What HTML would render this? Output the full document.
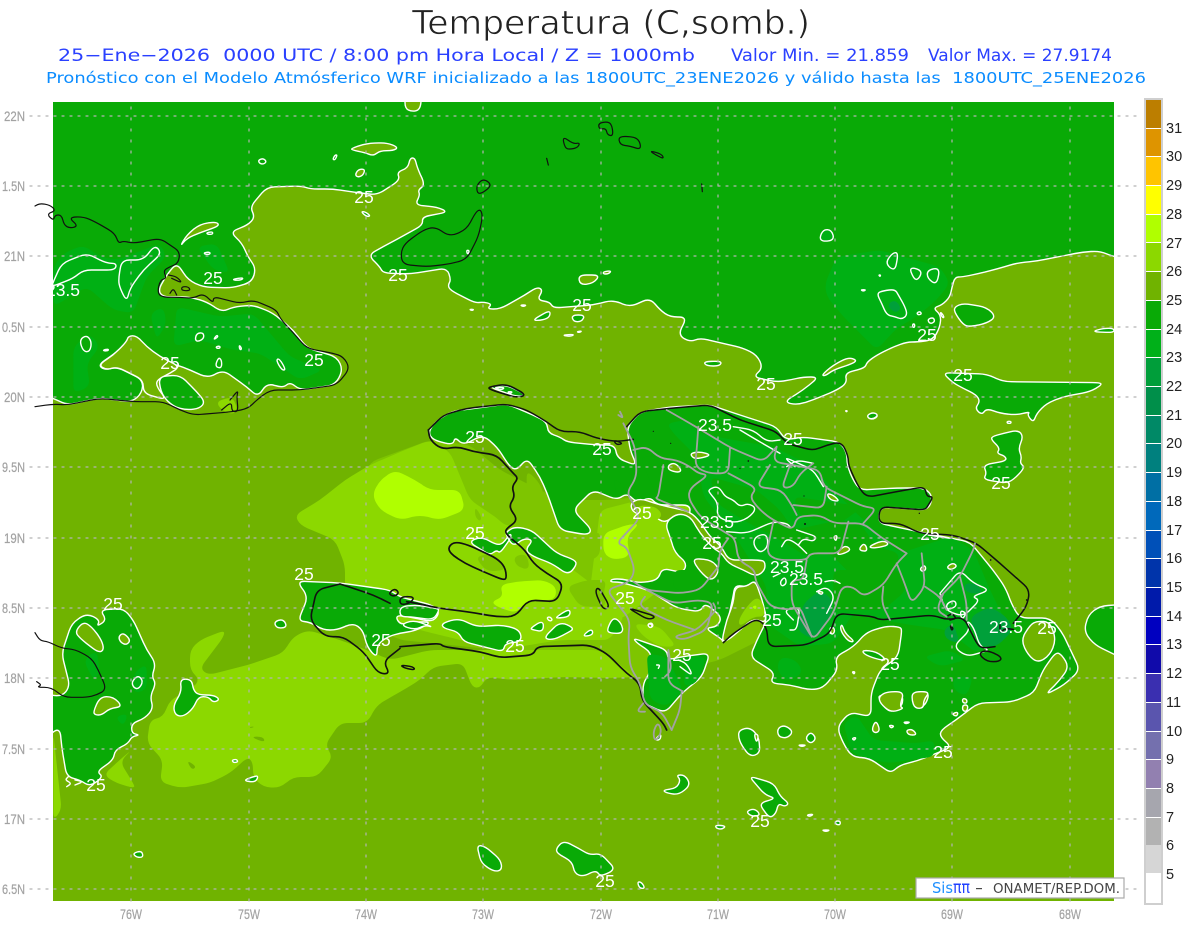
<!DOCTYPE html>
<html><head><meta charset="utf-8"><title>Temperatura</title>
<style>
html,body{margin:0;padding:0;background:#fff}
svg{display:block}
path{vector-effect:non-scaling-stroke;stroke-linejoin:round;stroke-linecap:round}
.c{stroke:#fff;stroke-width:1.4}
.d{fill:#09aa06}.o{fill:#70b300}.m{fill:#00b014}.l{fill:#8cd800}.y{fill:#b0ff00}.t{fill:#7ec500}.q{fill:#00a03a}
.n{fill:none}
.k{fill:none;stroke:#111;stroke-width:1.2}
.g{fill:none;stroke:#a2a2a2;stroke-width:1.8}
.lab{font:17.5px "Liberation Sans",sans-serif;fill:#fff;text-anchor:middle}
.ax{font:14px "Liberation Sans",sans-serif;fill:#a2a2a2;stroke:#a2a2a2;stroke-width:.2}
.cb{font:14.5px "Liberation Sans",sans-serif;fill:#222}
</style></head><body>
<svg width="1200" height="927" viewBox="0 0 1200 927" xmlns="http://www.w3.org/2000/svg">
<defs><clipPath id="pl"><rect x="53" y="102" width="1061" height="799"/></clipPath></defs>
<rect width="1200" height="927" fill="#fff"/>
<text x="412" y="34" font-family="DejaVu Sans,sans-serif" font-size="33" fill="#222" textLength="398" lengthAdjust="spacingAndGlyphs" stroke="#fff" stroke-width=".7">Temperatura (C,somb.)</text>
<g font-family="DejaVu Sans,sans-serif" font-size="17" fill="#2a40ff" lengthAdjust="spacingAndGlyphs">
<text x="58" y="61" textLength="637" lengthAdjust="spacingAndGlyphs" xml:space="preserve">25−Ene−2026  0000 UTC / 8:00 pm Hora Local / Z = 1000mb</text>
<text x="731" y="61" textLength="178" lengthAdjust="spacingAndGlyphs">Valor Min. = 21.859</text>
<text x="928" y="61" textLength="184" lengthAdjust="spacingAndGlyphs">Valor Max. = 27.9174</text>
</g>
<text x="46" y="83" font-family="DejaVu Sans,sans-serif" font-size="15.5" fill="#0a8cff" textLength="1100" lengthAdjust="spacingAndGlyphs" xml:space="preserve">Pronóstico con el Modelo Atmósferico WRF inicializado a las 1800UTC_23ENE2026 y válido hasta las  1800UTC_25ENE2026</text>

<g clip-path="url(#pl)">
<rect x="53" y="102" width="1061" height="799" class="o"/>
<!-- light zones -->
<path class="l" d="M225 630 223 638 200 668 208 675 248 665 283 653 293 637 308 630 340 640 367 650 390 660 430 650 500 650 620 650 640 677 607 678 563 677 513 680 487 677 480 688 472 687 463 663 433 667 420 680 400 692 377 705 367 723 340 723 325 745 333 757 317 777 293 777 280 788 263 787 253 777 253 763 248 757 230 773 210 783 180 788 160 782 163 760 147 743 150 720 163 717 170 700 190 690 200 680 190 670 190 650 200 640z"/>
<path class="t" d="M350 540 350 520 370 462 430 440 470 445 500 470 560 500 610 500 700 490 760 560 760 640 720 660 640 680 600 650 500 650 400 640 350 615z"/>
<path class="l" d="M295 515 320 500 345 480 370 465 400 452 430 440 450 452 470 500 500 520 560 560 600 590 625 615 610 640 560 640 500 650 440 635 400 625 350 615 310 605 345 590 345 565 335 540 300 525z"/>
<path class="l" d="M600 510 640 500 690 495 700 560 660 590 620 620 590 590z"/>
<path class="y" d="M380 480 395 470 415 480 430 490 460 490 465 510 440 520 420 515 400 520 380 510 372 495z"/>
<g transform="translate(400 390) scale(.33333)">
<path class="t" d="M245 310 290 270 340 250 350 320 330 360 350 400 320 410 250 350zM225 350 245 380 240 395 225 380zM225 500 280 490 320 540 260 545zM340 500 380 490 390 540 350 530z"/>
<path class="y" d="M300 585 350 575 430 570 470 590 465 630 385 630 350 670 290 650 275 635 310 620z"/>
<path class="y" d="M610 430 680 405 720 400 680 440 690 500 640 510 610 490z"/>
<path class="t" d="M500 590 560 570 620 570 610 610 620 650 540 650z"/>
<path class="t" d="M380 240 420 280 470 430 560 450 600 420 600 500 540 520 460 470 380 330z"/>
</g>
<g transform="translate(600 390) scale(.33333)">
<path class="l" d="M420 660 460 600 480 590 500 660 470 680 430 710z"/>
<path class="y" d="M452 650 470 645 468 660z"/>
<path class="l" d="M100 700 180 710 230 770 180 770 130 740zM0 790 60 820 90 860 0 860z"/>
</g>
<g transform="translate(0 580) scale(.33333)">
<path class="l" d="M310 585 370 530 395 510 360 545 400 610 405 625 350 610zM160 460 185 690 160 720z"/>
<path class="o" d="M560 540 590 560 575 570zM750 440 765 440 750 445zM750 470 790 470 795 488z"/>
</g>
<!-- top dark region -->
<path class="d c" d="M40 90 1130 90 1130 258 1114 257 1100 251 1083 252 1057 257 1037 261 1017 263 997 269 977 274 962 277 955 277 952 287 950 297 942 305 933 308 941 315 940 327 933 340 917 342 907 342 893 347 877 355 867 362 865 368 845 373 847 383 837 390 813 400 797 405 784 402 803 390 819 377 803 377 790 380 777 382 753 377 763 368 757 355 743 348 717 342 700 338 690 342 678 335 687 317 670 317 660 310 650 298 630 307 613 300 593 305 553 308 550 302 537 300 543 290 537 287 525 295 500 309 487 309 492 304 483 302 475 303 450 290 448 285 451 280 447 268 410 274 383 273 380 267 368 255 390 243 423 225 422 217 448 212 437 207 415 205 420 195 418 190 425 185 417 167 415 158 410 158 408 168 397 172 400 180 377 195 353 192 333 189 310 189 302 186 267 187 250 207 255 217 248 225 230 232 242 243 248 257 256 268 252 282 232 288 203 287 188 280 177 263 168 273 158 290 163 297 190 297 207 302 222 312 233 307 253 305 273 313 293 330 307 348 337 357 343 370 335 385 300 390 290 382 283 388 267 383 258 397 247 387 223 370 208 378 183 367 160 360 147 353 133 336 127 342 117 352 98 365 105 370 117 367 143 380 142 393 132 402 100 398 67 405 53 398 40 395z"/>
<!-- cuba interior -->
<g transform="translate(0 100) scale(.33333)">
<path class="m" d="M160 500 190 460 250 435 300 470 350 480 430 450 480 430 500 470 440 530 400 640 340 630 260 560 160 620zM450 640 490 620 500 670 470 720zM520 740 530 620 660 650 760 640 870 770 970 810 900 840 780 760 700 750 600 720zM220 740 270 700 300 740 260 790 270 860 220 880zM590 440 650 430 690 520 640 510zM420 810 435 808 425 812z"/>
<path class="o c" d="M540 440 560 405 600 372 650 365 658 378 600 398 560 415z"/>
<path class="m c" d="M160 545 185 490 260 460 320 490 350 490 345 510 250 510 220 535 155 560zM355 540 365 480 430 480 465 435 485 460 430 510 390 565 380 605 360 565z"/>
<path class="d c" d="M620 398 638 395 638 403 622 403zM612 458 630 456 630 463 615 463zM700 537 730 533 725 540 702 541z"/>
<path class="d c" d="M585 720 590 700 610 698 612 715 595 725zM238 720 260 705 275 725 270 755 250 755zM645 800 655 772 665 780 665 805zM828 780 838 775 858 810 845 810zM1005 165 1012 165 1005 180 998 178zM775 180 790 175 800 185 790 193 778 190zM718 735 725 745 722 750 718 745zM310 750 325 747 325 752 312 753z"/>
<path style="fill:#8cd800;stroke:none" d="M645 905 700 890 715 940 675 940z"/>
<path class="o c" d="M385 708 410 707 440 740 480 770 540 800 510 820 470 840 470 860 500 900 430 880 430 840 350 800 320 810 295 795 340 765 380 725z"/>
<path class="d c" d="M475 830 540 825 590 875 615 905 600 925 560 930 520 920 485 885z"/>
<path class="m c" d="M640 720 650 705 655 710zM648 740 660 738 660 745 650 745z"/>
</g>
<g transform="translate(0 580) scale(.33333)">
<path class="d c" d="M185 220 215 130 260 100 300 120 290 140 320 120 300 90 370 85 400 120 440 210 468 250 455 290 468 310 450 350 460 385 435 415 395 430 395 460 420 465 395 470 385 490 345 510 340 540 290 575 310 590 270 620 240 600 200 590 185 500 180 445 150 460 150 700 120 700 120 340 185 350 210 320z"/>
<path class="m" d="M250 240 290 210 300 280 280 300zM400 280 440 250 440 330 400 340zM345 410 385 400 370 440z"/>
<path class="o c" d="M225 155 250 125 275 140 305 180 312 210 295 218 240 175zM355 170 370 158 392 180 380 195 362 188zM280 395 300 350 340 350 368 380 330 385 305 405 285 405z"/>
<path class="m c" d="M395 305 415 285 430 305 415 328 400 322z"/>
<path class="d c" d="M520 375 545 335 540 297 575 298 580 330 595 345 640 345 660 358 640 368 625 350 595 350 580 385 550 410 525 405zM398 820 425 812 430 832 410 832zM822 125 850 117 862 142 830 145zM696 540 710 538 714 546 700 548zM733 600 760 590 775 587 768 605 745 605z"/>
<path class="n c" d="M205 590 195 600 215 610 200 620M225 600 250 605 225 615"/>
</g>
<!-- south Haiti -->
<path class="d c" d="M297 581 308 597 298 621 310 622 323 630 337 630 353 623 363 630 367 647 377 658 377 645 387 637 400 633 415 631 432 622 412 622 400 625 395 615 410 617 433 622 440 612 432 605 400 597 390 590 340 583z"/>
<g transform="translate(400 390) scale(.33333)">
<path class="d c" d="M0 650 50 645 110 655 118 660 100 690 30 680 0 680z"/>
<path class="d c" d="M0 705 40 690 100 712 75 705 45 720z"/>
<path class="d c" d="M125 700 175 685 230 710 310 705 360 720 365 755 315 760 310 785 270 775 190 755 175 725 130 715z"/>
<path class="d c" d="M390 715 430 690 430 725 400 720zM470 680 510 655 510 680 470 685zM430 745 480 695 525 715 500 730 460 750zM545 740 575 715 580 735zM620 720 640 680 665 700 670 730 630 730z"/>
<path class="l c" d="M440 683 450 680 458 690 448 694z"/>
<path class="d c" d="M320 425 345 410 395 420 470 490 525 510 530 525 505 555 455 520 400 500 375 480 400 450 370 445 340 470 318 435zM205 455 245 440 290 465 310 460 330 430 335 440 300 490 290 480 270 495 245 480z"/>
<path class="d c" d="M742 703 755 698 760 708 750 714z"/>
</g>
<!-- main Hispaniola -->
<path class="d c" d="M428 432 437 420 453 411 470 409 507 404 533 415 547 422 548 433 560 437 567 442 597 445 615 445 617 458 637 466 630 450 627 427 640 412 670 407 710 405 740 415 777 427 785 440 803 437 840 442 847 453 847 465 853 480 860 490 897 488 925 488 933 497 928 510 880 507 878 523 920 532 970 542 993 570 1005 587 1013 607 1020 618 1050 618 1062 632 1080 670 1064 685 1045 695 1060 680 1069 667 1062 655 1056 652 1043 670 1034 693 1012 702 978 703 956 720 941 730 940 737 952 747 917 761 900 765 891 773 882 767 869 758 852 757 843 743 837 727 850 712 871 717 871 693 880 670 898 657 902 630 900 627 887 626 867 632 853 647 835 657 838 670 823 688 810 690 790 685 770 683 775 673 750 657 757 640 767 620 763 603 757 590 755 580 747 587 735 585 733 597 728 620 722 642 723 640 705 628 717 627 722 617 705 603 700 612 677 608 648 590 620 582 610 582 612 579 622 579 640 583 658 580 662 568 683 573 687 563 675 553 670 537 665 523 677 513 690 515 690 505 657 505 650 497 637 503 627 493 617 500 593 490 573 510 592 530 587 535 560 530 547 493 540 477 527 458 517 470 510 467 497 447 483 435 463 445 455 437 453 445 433 440z"/>
<g transform="translate(600 390) scale(.33333)">
<path class="m" d="M200 100 260 90 300 130 400 150 520 170 640 230 700 300 800 400 900 490 1050 440 1120 480 1170 600 1230 720 1130 790 1040 720 900 700 760 670 700 760 600 770 500 700 500 590 400 430 310 320 290 200 220 130z"/>
<path class="d" d="M330 260 470 300 540 360 580 420 720 390 780 400 830 470 900 490 880 560 760 560 690 490 620 500 540 450 430 390 350 340zM700 540 900 540 920 600 850 660 700 660zM580 320 790 350 720 400 600 380zM120 200 260 200 280 300 170 320zM40 260 80 300 50 320zM220 540 320 540 340 600 220 600z"/>
<path class="q" d="M610 640 660 600 700 630 690 690 640 750 590 720zM1110 680 1170 650 1220 680 1240 720 1190 770 1140 770 1120 720zM1090 580 1130 580 1150 610 1100 610zM1030 720 1060 700 1080 760 1040 750z"/>
<path class="m" d="M540 800 590 810 610 850 560 875 530 840zM970 800 1050 780 1100 810 1020 830zM1060 860 1120 860 1100 920 1060 900z"/>
<!-- pockets -->
<path class="o c" d="M90 340 120 325 180 345 270 365 300 395 330 440 365 470 385 510 430 510 480 510 495 515 495 540 470 560 430 540 385 520 365 490 340 475 300 430 270 378 230 370 195 400 165 380 100 370z"/>
<path class="l" d="M110 345 170 350 190 380 130 410 110 390z"/>
<path class="o c" d="M275 505 335 510 360 540 335 575 300 545z"/>
<path class="o c" d="M205 225 225 218 245 240 235 248 205 240zM270 190 300 185 335 195 300 205 280 205z"/>
<path class="o c" d="M680 310 700 315 720 335 690 330zM775 480 790 460 800 470 800 485zM805 470 850 450 870 465 820 475zM710 490 735 465 755 480 720 495zM700 440 712 435 708 455zM960 535 975 525 978 540 965 545zM1040 530 1060 518 1072 530 1050 540z"/>
<!-- south pocket -->
<path class="o c" d="M365 755 380 690 400 640 405 590 440 590 465 570 490 640 500 700 460 685 420 720 385 750z"/>
<path class="l" d="M415 690 440 650 470 620 490 640 495 680 460 680 420 710z"/>
<path class="y" d="M455 650 470 645 468 660z"/>
<path class="n c" d="M325 300 345 290 360 295 375 320 400 330 420 350 445 340 470 355 445 385 400 400 350 380 355 340 330 310zM380 425 440 430 520 395 560 400 570 410M465 440 500 430 505 470 480 490 460 465zM545 470 560 445 590 460 620 490M590 420 620 430 650 440 640 455 610 445 595 465M540 575 555 560 560 580 545 590zM520 560 540 550M650 605 680 590 705 620 680 670M675 575 700 570 720 580M585 230 550 200 640 240 670 290M400 110 460 120 500 155 540 150M560 230 590 210 640 220M420 120 470 150 540 190M1020 610 1080 540 1120 580 1170 600 1115 620 1140 630 1090 680 1035 660 1020 610M1060 770 1110 720 1100 690 1120 710 1140 770 1170 780 1100 800zM1040 640 1065 630 1070 650 1040 660zM1080 660 1100 670 1085 690zM985 435 1050 445M580 690 550 660 600 650 590 720 570 720M690 710 700 720 690 735z"/>
<path class="d c" d="M785 780 830 785 860 810 840 810 795 795z"/>
<path class="o c" d="M725 700 735 730 765 755 745 755 720 720z"/>
<path class="o c" d="M690 720 700 710 705 725 695 735z"/>
<path class="d c" d="M803 75 820 68 835 78 820 88 805 85z"/>
<path class="o c" d="M840 915 905 905 910 945 880 965 860 960 835 925zM940 905 990 905 975 950 940 955z"/>
<path class="o c" d="M650 605 670 605 665 615z"/>
</g>
<path class="d c" d="M633 638 667 650 668 660 680 657 710 653 702 677 683 692 665 713 643 703 643 683 650 673 652 653 637 643z"/>
<g transform="translate(600 390) scale(.33333)">
<path class="m" d="M140 790 200 800 250 900 200 950 150 930z"/>
<path class="m" d="M260 800 320 800 290 880 250 890z"/>
<path class="n c" d="M235 810 260 820 280 860 240 830M170 825 180 825 175 835"/>
<path class="o c" d="M143 705 150 700 158 708 150 714z"/>
</g>
<g transform="translate(440 640) scale(.43365 .33333)">
<path class="d c" d="M85 615 105 620 140 660 143 690 125 695 95 670zM268 625 285 602 320 625 345 645 370 640 405 688 370 710 360 690 330 710 310 700 305 665 270 640zM515 450 545 445 555 420 545 405 565 405 578 435 550 465 520 458zM712 408 770 430 785 470 805 490 795 500 780 490 775 520 760 535 735 490 775 475 750 465zM705 515 725 505 740 525 720 530zM690 270 715 262 735 290 738 340 715 350 695 315 688 290zM778 265 795 255 815 275 800 295 780 290zM855 275 868 295 855 312 842 295zM635 555 660 558 650 568 637 565zM455 725 465 727 473 745 460 745zM845 525 862 522 853 530zM825 315 845 315 835 320zM880 570 900 570 890 575zM912 543 923 543 923 555 912 553zM950 95 957 95 955 103zM495 300 510 280 508 300z"/>
<path class="m" d="M930 250 960 225 1000 300 1100 310 1140 300 1140 350 1030 370 950 340z"/>
<path class="o c" d="M1012 170 1030 155 1070 155 1060 200 1070 205 1040 218 1015 190zM1090 155 1130 155 1115 180 1115 205 1095 205 1088 180zM995 270 1005 240 1015 270 1005 280zM1075 270 1090 268 1100 285 1080 285zM1068 246 1085 246 1075 252zM1035 255 1048 258 1040 265zM950 295 960 292 955 302zM1205 175 1215 178 1215 190 1205 188zM1205 195 1218 195 1215 215 1205 212zM1180 222 1195 215 1192 230z"/>
<path class="o c" d="M724 280 735 285 730 310z"/>
</g>
<!-- right side -->
<g transform="translate(770 200) scale(.33333)">
<path class="m" d="M165 250 200 170 330 150 400 170 510 200 540 250 500 300 440 350 380 385 320 450 270 400 220 350 170 290z"/>
<path class="m c" d="M148 115 160 88 185 90 193 120 160 125zM345 190 368 158 385 158 375 215zM415 200 460 212 438 248zM472 210 510 203 500 255 472 235z"/>
<path class="m c" d="M320 280 340 272 375 268 385 285 405 320 412 345 395 358 375 350 350 345 335 310z"/>
<path class="q" d="M350 315 375 298 395 325 375 340z"/>
<path class="o c" d="M155 525 190 495 235 472 260 480 250 490 190 510 165 528z"/>
<path class="d c" d="M555 320 580 310 650 322 678 350 650 370 600 380 580 375 552 335z"/>
<path class="d c" d="M518 518 650 522 700 545 990 548 995 555 960 575 880 590 830 610 800 640 790 668 772 645 780 635 740 645 690 640 650 625 635 645 615 625 630 605 620 585 570 560 545 545z"/>
<path class="d c" d="M665 710 700 700 745 690 760 710 745 745 755 770 750 790 765 802 735 835 710 850 640 838 650 820 640 795 710 782 705 768 680 760 690 745 665 720z"/>
<path class="d c" d="M292 645 310 637 325 645 310 657 295 655zM965 395 1000 385 1032 385 1032 398z"/>
<path class="d c" d="M711 664 723 664 723 670 712 670zM440 339 450 334 455 342 445 345zM472 358 490 352 495 365 480 372zM428 372 434 372 434 382 428 382zM510 335 520 345 522 354 515 350zM272 269 288 269 280 274zM326 225 332 225 330 230zM226 632 232 632 230 636z"/>
</g>
<path class="d c" d="M1130 604 1100 606 1088 615 1084 632 1095 645 1130 662z"/>
<g transform="translate(350 100) scale(.33333)">
<path class="o c" d="M5 145 50 130 110 128 145 142 130 152 90 152 70 168 45 158 5 150zM15 225 25 208 45 207 40 225 25 232zM165 -10 215 -10 210 30 185 35 165 25z"/>
<path class="o c" d="M685 525 750 525 730 550 690 555zM760 515 785 512 775 522 760 522z"/>
<path class="d c" d="M33 335 45 335 62 348 50 350zM1060 785 1115 783 1110 798 1070 798zM545 662 600 630 600 650 580 660zM665 645 705 645 695 665 670 665zM635 705 675 703 660 710zM358 628 372 628 366 632zM510 615 530 615 520 620zM680 695 696 693 688 698zM415 860 470 855 530 885 500 890z"/>
<path class="m c" d="M350 450 358 452 355 462 351 460z"/>
<path class="m c" d="M430 862 465 862 455 870zM472 875 488 875 480 882z"/>
</g>
<!-- pocket on SE -->
<path class="o c" d="M1021 640 1030 625 1037 621 1050 622 1056 640 1050 655 1038 663 1028 655z"/>
</g>

<!-- coast lines -->
<g transform="translate(0 100) scale(.33333)">
<path class="k" d="M105 318 120 310 150 315 168 332 140 342 160 362 165 345 185 345 192 375 210 385 235 378 205 352 250 350 285 365 345 400 355 430 370 423 400 430 480 415 510 435 540 455 535 490 510 500 490 512 500 535 480 540 472 580 490 592 540 592 580 595 610 580 640 610 640 590 680 600 720 610 760 600 830 630 840 655 890 710 920 745 1000 760 1030 770 1050 805 1010 855 900 870 810 870 770 900 745 925 700 935 640 940 580 945 540 930 490 905 400 905 300 895 200 915 160 912 105 920"/>
<path class="k" d="M505 525 530 530 548 550 515 535M545 560 565 560 572 572 545 572zM510 580 520 565 530 585M690 900 715 870 710 890 715 935 695 935 695 905 665 930"/>
</g>
<g transform="translate(0 580) scale(.33333)">
<path class="k" d="M105 158 120 182 145 185 185 205 225 208 275 235 295 270 320 328 290 345 260 352 190 352 155 322 110 322 125 315 110 305"/>
<path class="k" style="stroke-width:1.6" d="M1020 12 1060 25 1120 45 1170 70M1020 12 950 30 930 120 975 170 1030 170 1090 215 1135 280 1170 282 1150 245 1200 205M1165 40 1185 25 1198 40 1180 50z"/>
</g>
<g transform="translate(350 100) scale(.33333)">
<path class="k" d="M378 258 400 235 428 256 385 287zM637 108 670 132 690 128 683 143 660 148 645 145zM745 70 770 65 785 72 790 108 772 105 768 85 748 88zM805 108 865 112 875 150 840 138 810 135zM898 152 935 162 942 177 918 165zM590 175 595 195M1055 252 1057 275"/>
<path class="k" d="M152 458 165 430 220 390 255 380 300 410 350 388 378 335 392 328 398 350 385 410 350 478 300 492 230 500 158 493z"/>
<path class="k" style="stroke-width:1.6" d="M410 862 470 852 530 885 500 893 430 872z"/>
</g>
<g transform="translate(400 390) scale(.33333)">
<path class="k" style="stroke-width:1.7" d="M85 120 90 150 125 178 175 170 220 185 290 195 340 250 355 265 335 290 345 320 325 350 355 390 320 415 315 430 375 480 400 520 440 550 490 580 470 635 385 630 345 680 290 680 200 665 120 655 50 640 20 635"/>
<path class="k" style="stroke-width:1.5" d="M85 120 130 75 200 55 320 42 380 60 440 95 480 125 540 125 590 145 650 155 700 148"/>
<path class="k" style="stroke-width:1.7" d="M145 470 165 455 205 465 290 505 315 530 320 565 310 570 250 545 195 520 150 490z"/>
<path class="k" style="stroke-width:1.7" d="M0 770 120 760 130 770 240 785 300 803 400 795 410 770 570 765 620 790 680 850 720 880 725 930 790 1000 800 1020"/>
<path class="k" style="stroke-width:1.5" d="M595 590 630 650 610 660 585 605zM690 655 770 680 745 690 695 660zM0 620 45 620 30 640 0 645zM0 825 40 830 45 840 15 835zM640 150 670 160 650 165z"/>
</g>
<g transform="translate(600 390) scale(.33333)">
<path class="k" style="stroke-width:1.5" d="M80 110 120 65 210 55 330 45 420 90 530 125 560 160 640 182 680 165 725 155 745 200 745 225 775 290 800 322 890 305 975 290 980 320 1000 320 985 345 975 360 840 350 835 400 900 400 960 430 1060 435 1130 460 1200 520 1290 600 1280 650 1240 700"/>
<path class="k" style="stroke-width:1.5" d="M370 758 400 730 470 685 500 710 505 770 620 765 690 730 710 670 820 680 840 690 1000 675 1040 690 1090 680 1130 760 1145 775 1185 770M1135 790 1160 780 1205 800 1200 815 1160 815zM1050 705 1060 715 1055 722zM1040 680 1055 670 1070 685 1050 690M1200 705 1200 730 1215 715 1240 718"/>
<g fill="#111"><circle cx="160" cy="124" r="1.8"/><circle cx="212" cy="160" r="1.8"/><circle cx="445" cy="213" r="2.5"/><circle cx="420" cy="235" r="1.8"/><circle cx="615" cy="402" r="3"/><circle cx="612" cy="318" r="1.8"/><circle cx="1172" cy="510" r="2.5"/><circle cx="1280" cy="630" r="2.5"/><circle cx="958" cy="370" r="2"/></g>
<path class="g" d="M70 100 105 170 110 260 80 310 100 340 120 385 50 460 80 470 105 540 90 575 20 600 90 690 85 740 90 830 120 880 135 945 185 965 215 1020"/>
<path class="g" d="M100 180 140 170 180 205 230 210 270 230 295 250 325 255 270 295 265 325 300 380 380 430 405 445 415 510 465 540 465 570 510 650 570 660 600 650 635 740"/>
<path class="g" d="M190 225 175 320 165 325 265 365M200 60 270 100 395 175 490 215 530 170M295 110 290 180 285 230 325 250 385 250 390 175M385 250 470 295 450 320 470 350 510 385 580 420 590 380 660 375 700 400 790 400 840 440 920 490M510 225 470 290 545 300 575 345 590 375M570 225 545 295 580 290 600 250 640 220M530 170 520 215 660 240 670 290 790 350 830 355 790 400M580 345 670 355 680 290M520 395 500 490 530 510 620 510 630 490 720 490 745 395M620 510 610 570 575 570 575 640 640 750 700 670 725 590 760 590 790 620 850 585 890 520 920 490M850 590 845 640 870 690M890 520 910 570 935 640 975 590 965 490M975 590 1020 620 1040 660M1020 620 1080 560 1120 480 1125 460M1080 560 1100 640 1100 690M1030 610 1010 660 1040 680M355 530 300 600 240 610 140 600 100 575M355 530 360 480 385 445M340 640 350 660 290 720 220 740 250 750 320 720 340 640 300 630 220 640 140 600M135 620 120 640 130 655 200 690 285 720M205 780 205 880 250 905M195 860 215 840 205 780M245 905 240 960 215 1020M130 940 110 965 135 965"/>
<path class="g" d="M60 65 70 85 55 75"/>
</g>
<path class="g" d="M658 722 662 732 655 742 653 732z"/>
<!-- grid -->
<g fill="none" stroke="#b4b4b4" stroke-width="1.2" stroke-dasharray="2 6">
<path d="M30 116H1136M30 186H1136M30 256H1136M30 327H1136M30 397H1136M30 467H1136M30 538H1136M30 608H1136M30 678H1136M30 749H1136M30 819H1136M30 889H1136"/>
</g>
<g fill="none" stroke="#b4b4b4" stroke-width="1.2" stroke-dasharray="2 9">
<path d="M131 107V908M249 107V908M366 107V908M483 107V908M601 107V908M718 107V908M835 107V908M952 107V908M1070 107V908"/>
</g>
<!-- labels -->
<g clip-path="url(#pl)" class="labs">
<text class="lab" x="364" y="203">25</text><text class="lab" x="398" y="281">25</text><text class="lab" x="582" y="311">25</text><text class="lab" x="213" y="284">25</text><text class="lab" x="170" y="369">25</text><text class="lab" x="314" y="366">25</text><text class="lab" x="475" y="443">25</text><text class="lab" x="602" y="455">25</text><text class="lab" x="642" y="519">25</text><text class="lab" x="475" y="539">25</text><text class="lab" x="304" y="580">25</text><text class="lab" x="113" y="610">25</text><text class="lab" x="381" y="646">25</text><text class="lab" x="515" y="652">25</text><text class="lab" x="625" y="604">25</text><text class="lab" x="712" y="549">25</text><text class="lab" x="682" y="661">25</text><text class="lab" x="772" y="626">25</text><text class="lab" x="793" y="445">25</text><text class="lab" x="930" y="540">25</text><text class="lab" x="927" y="341">25</text><text class="lab" x="766" y="390">25</text><text class="lab" x="963" y="381">25</text><text class="lab" x="1001" y="489">25</text><text class="lab" x="1047" y="634">25</text><text class="lab" x="890" y="670">25</text><text class="lab" x="943" y="758">25</text><text class="lab" x="760" y="827">25</text><text class="lab" x="605" y="887">25</text><text class="lab" x="96" y="791">25</text>
<text class="lab" x="63" y="296">23.5</text><text class="lab" x="715" y="431">23.5</text><text class="lab" x="717" y="528">23.5</text><text class="lab" x="787" y="573">23.5</text><text class="lab" x="806" y="585">23.5</text><text class="lab" x="1006" y="633">23.5</text>
</g>
<!-- axis text -->
<g class="ax">
<text x="4" y="121" textLength="21" lengthAdjust="spacingAndGlyphs">22N</text>
<text x="2" y="191" textLength="23" lengthAdjust="spacingAndGlyphs">1.5N</text>
<text x="4" y="261" textLength="21" lengthAdjust="spacingAndGlyphs">21N</text>
<text x="2" y="332" textLength="23" lengthAdjust="spacingAndGlyphs">0.5N</text>
<text x="4" y="402" textLength="21" lengthAdjust="spacingAndGlyphs">20N</text>
<text x="2" y="472" textLength="23" lengthAdjust="spacingAndGlyphs">9.5N</text>
<text x="4" y="543" textLength="21" lengthAdjust="spacingAndGlyphs">19N</text>
<text x="2" y="613" textLength="23" lengthAdjust="spacingAndGlyphs">8.5N</text>
<text x="4" y="683" textLength="21" lengthAdjust="spacingAndGlyphs">18N</text>
<text x="2" y="754" textLength="23" lengthAdjust="spacingAndGlyphs">7.5N</text>
<text x="4" y="824" textLength="21" lengthAdjust="spacingAndGlyphs">17N</text>
<text x="2" y="894" textLength="23" lengthAdjust="spacingAndGlyphs">6.5N</text>
<text x="120" y="919" textLength="22" lengthAdjust="spacingAndGlyphs">76W</text>
<text x="238" y="919" textLength="22" lengthAdjust="spacingAndGlyphs">75W</text>
<text x="355" y="919" textLength="22" lengthAdjust="spacingAndGlyphs">74W</text>
<text x="472" y="919" textLength="22" lengthAdjust="spacingAndGlyphs">73W</text>
<text x="590" y="919" textLength="22" lengthAdjust="spacingAndGlyphs">72W</text>
<text x="707" y="919" textLength="22" lengthAdjust="spacingAndGlyphs">71W</text>
<text x="824" y="919" textLength="22" lengthAdjust="spacingAndGlyphs">70W</text>
<text x="941" y="919" textLength="22" lengthAdjust="spacingAndGlyphs">69W</text>
<text x="1059" y="919" textLength="22" lengthAdjust="spacingAndGlyphs">68W</text>
</g>
<!-- colorbar -->
<rect x="1145" y="99" width="17" height="805" fill="#fff" stroke="#cfcfcf" stroke-width="2"/>
<g>
<rect x="1146" y="100" width="15" height="28" fill="#bc7e00"/>
<rect x="1146" y="129" width="15" height="27" fill="#de9400"/>
<rect x="1146" y="157" width="15" height="28" fill="#ffc400"/>
<rect x="1146" y="186" width="15" height="28" fill="#ffff00"/>
<rect x="1146" y="215" width="15" height="27" fill="#b0ff00"/>
<rect x="1146" y="243" width="15" height="28" fill="#8cd800"/>
<rect x="1146" y="272" width="15" height="28" fill="#70b300"/>
<rect x="1146" y="301" width="15" height="28" fill="#09aa06"/>
<rect x="1146" y="330" width="15" height="27" fill="#00b019"/>
<rect x="1146" y="358" width="15" height="28" fill="#009e3a"/>
<rect x="1146" y="387" width="15" height="28" fill="#008f4a"/>
<rect x="1146" y="416" width="15" height="27" fill="#008966"/>
<rect x="1146" y="444" width="15" height="28" fill="#00807e"/>
<rect x="1146" y="473" width="15" height="28" fill="#006fa4"/>
<rect x="1146" y="502" width="15" height="28" fill="#0069bb"/>
<rect x="1146" y="531" width="15" height="27" fill="#0050b8"/>
<rect x="1146" y="559" width="15" height="28" fill="#0034aa"/>
<rect x="1146" y="588" width="15" height="28" fill="#001aaa"/>
<rect x="1146" y="617" width="15" height="27" fill="#0000c0"/>
<rect x="1146" y="645" width="15" height="28" fill="#100aaa"/>
<rect x="1146" y="674" width="15" height="28" fill="#3a2fb0"/>
<rect x="1146" y="703" width="15" height="28" fill="#5a55ae"/>
<rect x="1146" y="732" width="15" height="27" fill="#7470ae"/>
<rect x="1146" y="760" width="15" height="28" fill="#9280b0"/>
<rect x="1146" y="789" width="15" height="28" fill="#a6a6ae"/>
<rect x="1146" y="818" width="15" height="27" fill="#b2b2b2"/>
<rect x="1146" y="845" width="15" height="28" fill="#d6d6d6"/>
<rect x="1146" y="873" width="15" height="30" fill="#fff"/>
</g>
<g class="cb">
<text x="1166" y="133">31</text><text x="1166" y="161">30</text><text x="1166" y="190">29</text><text x="1166" y="219">28</text><text x="1166" y="248">27</text><text x="1166" y="276">26</text><text x="1166" y="305">25</text><text x="1166" y="334">24</text><text x="1166" y="362">23</text><text x="1166" y="391">22</text><text x="1166" y="420">21</text><text x="1166" y="448">20</text><text x="1166" y="477">19</text><text x="1166" y="506">18</text><text x="1166" y="535">17</text><text x="1166" y="563">16</text><text x="1166" y="592">15</text><text x="1166" y="621">14</text><text x="1166" y="649">13</text><text x="1166" y="678">12</text><text x="1166" y="707">11</text><text x="1166" y="736">10</text><text x="1166" y="764">9</text><text x="1166" y="793">8</text><text x="1166" y="822">7</text><text x="1166" y="850">6</text><text x="1166" y="879">5</text>
</g>
<!-- logo box -->
<rect x="916" y="878" width="208" height="20" fill="#fff" stroke="#aaa" stroke-width="1.2"/>
<text x="932" y="893" font-family="DejaVu Sans,sans-serif" font-size="15" fill="#1e90ff" textLength="21" lengthAdjust="spacingAndGlyphs">Sis</text>
<text x="953" y="893" font-family="DejaVu Sans,sans-serif" font-size="17" fill="#2040ff" textLength="17" lengthAdjust="spacingAndGlyphs">ππ</text>
<text x="975" y="893" font-family="DejaVu Sans,sans-serif" font-size="14" fill="#444" textLength="8" lengthAdjust="spacingAndGlyphs">−</text>
<text x="993" y="893" font-family="DejaVu Sans,sans-serif" font-size="13.5" fill="#444" textLength="127" lengthAdjust="spacingAndGlyphs">ONAMET/REP.DOM.</text>
</svg>
<script>
document.querySelectorAll('svg path').forEach(function(p){
  var d=p.getAttribute('d');
  if(!d||/[HV]/.test(d))return;
  var m=p.getCTM(),s=m?Math.abs(m.a):1,R=8/(s||1),out='';
  d.split(/(?=M)/).forEach(function(sub){
    var closed=/z/i.test(sub),n=sub.match(/-?[\d.]+/g);
    if(!n||n.length<4)return;
    var P=[];for(var i=0;i+1<n.length;i+=2)P.push([+n[i],+n[i+1]]);
    var L=P.length;
    if(L<3||(!closed&&L<3)){out+='M'+P.map(function(a){return a.join(' ')}).join(' ');return;}
    function along(a,b){var dx=b[0]-a[0],dy=b[1]-a[1],l=Math.hypot(dx,dy)||1,r=Math.min(l/2,R)/l;return [a[0]+dx*r,a[1]+dy*r];}
    var seg='',start=closed?0:1,end=closed?L:L-1;
    if(!closed)seg='M'+P[0].join(' ');
    for(var j=start;j<end;j++){
      var c=P[j],a=along(c,P[(j-1+L)%L]),b=along(c,P[(j+1)%L]);
      seg+=(seg?'L':'M')+a[0].toFixed(1)+' '+a[1].toFixed(1)+'Q'+c[0]+' '+c[1]+' '+b[0].toFixed(1)+' '+b[1].toFixed(1);
    }
    seg+=closed?'z':'L'+P[L-1].join(' ');
    out+=seg;
  });
  if(out)p.setAttribute('d',out);
});
</script>
</body></html>
